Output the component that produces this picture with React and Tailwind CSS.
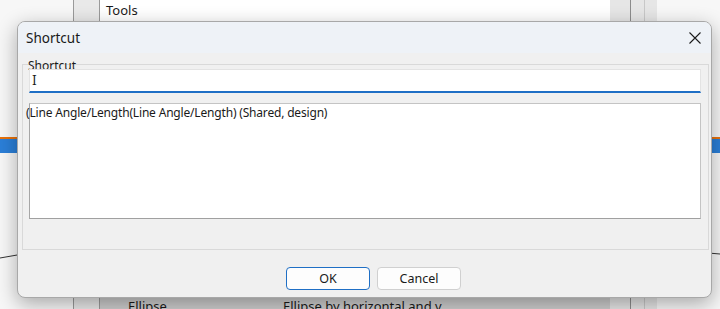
export default function App() {
  return (
    <div className="relative w-[720px] h-[309px] overflow-hidden bg-white font-['Noto_Sans',sans-serif] text-[#1a1a1a]">
      {/* background app window */}
      <div className="flex h-full w-full">
        <div className="w-[73px] shrink-0 h-full bg-[#f7f7f7]" />
        <div className="w-[27px] shrink-0 h-full bg-[#e9e9e9] border-x border-[#9a9a9a]" />
        <div className="w-[510px] shrink-0 h-full flex flex-col bg-white">
          <div className="h-[21px] pl-[6px] pt-[1px] text-[13px] leading-[18px]">Tools</div>
          <div className="flex-1" />
          <div className="h-[12px] bg-[#cdcdcd] flex text-[13px] leading-[18px] whitespace-nowrap">
            <span className="w-[183px] shrink-0 pl-[28px]">Ellipse</span>
            <span>Ellipse by horizontal and v</span>
          </div>
        </div>
        <div className="w-[47px] shrink-0 h-full bg-[#e6e6e6] flex">
          <div className="w-[21px] h-full border-r border-[#8c8c8c]" />
          <div className="w-[14px] h-full border-r border-[#c8c8c8]" />
        </div>
        <div className="flex-1 h-full bg-[#f7f7f7]" />
      </div>

      {/* canvas decorations behind dialog */}
      <div className="absolute left-0 top-[137px] w-[20px] h-[16px] border-t-2 border-[#e8720c] bg-[#2b7fd8]" />
      <div className="absolute left-[708px] top-[137px] w-[12px] h-[16px] border-t-2 border-[#e8720c] bg-[#2b7fd8]" />
      <svg className="absolute left-0 top-0" width="720" height="309">
        <line x1="0" y1="258" x2="20" y2="254.5" stroke="#333" strokeWidth="1" />
        <line x1="708" y1="253" x2="720" y2="254" stroke="#333" strokeWidth="1" />
      </svg>

      {/* dialog */}
      <div className="absolute left-[17px] top-[21px] w-[695px] h-[277px] rounded-[8px] border border-[#a8a8a8] bg-[#f0f0f0] shadow-[0_6px_20px_rgba(0,0,0,0.32)] overflow-hidden flex flex-col">
        <div className="h-[31px] shrink-0 bg-[#eef2f7] flex items-center justify-between pl-[8px] pr-[10px]">
          <span className="text-[13.5px] leading-[18px] mt-[1px]">Shortcut</span>
          <svg width="12" height="12" viewBox="0 0 12 12" className="mt-[1px]">
            <path d="M0.5 0.5 L11.5 11.5 M11.5 0.5 L0.5 11.5" stroke="#1b1b1b" strokeWidth="1.1" fill="none" />
          </svg>
        </div>

        <div className="relative ml-[4px] mt-[11px] w-[687px] h-[186px] border border-[#d9d9d9] flex flex-col">
          <span className="absolute left-[5px] top-[-6px] text-[12px] leading-[14px]">Shortcut</span>
          <div className="relative ml-[6px] mt-[4px] w-[672px] h-[24px] bg-white border border-[#e3e3e3] border-b-2 border-b-[#1f6fc5] flex items-center pl-[2px]">
            <span className="font-['DejaVu_Serif',serif] text-[12px] leading-[14px] mt-[1px]">I</span>
          </div>
          <div className="relative ml-[6px] mt-[10px] w-[672px] h-[116px] bg-white border border-[#c4c4c4] border-l-[#a6a6a6] border-b-[#a0a0a0]">
            <div className="ml-[-4px] mt-[1px] text-[12px] leading-[16px] tracking-[-0.18px] whitespace-nowrap">
              (Line Angle/Length(Line Angle/Length) (Shared, design)
            </div>
          </div>
        </div>

        <div className="flex gap-[7px] ml-[268px] mt-[17px]">
          <button className="w-[84px] h-[23px] rounded-[4px] border border-[#1f6fc5] bg-[#fdfdfd] text-[12.5px] leading-[16px]">OK</button>
          <button className="w-[84px] h-[23px] rounded-[4px] border border-[#d0d0d0] bg-[#fdfdfd] text-[12.5px] leading-[16px]">Cancel</button>
        </div>
      </div>
    </div>
  );
}
